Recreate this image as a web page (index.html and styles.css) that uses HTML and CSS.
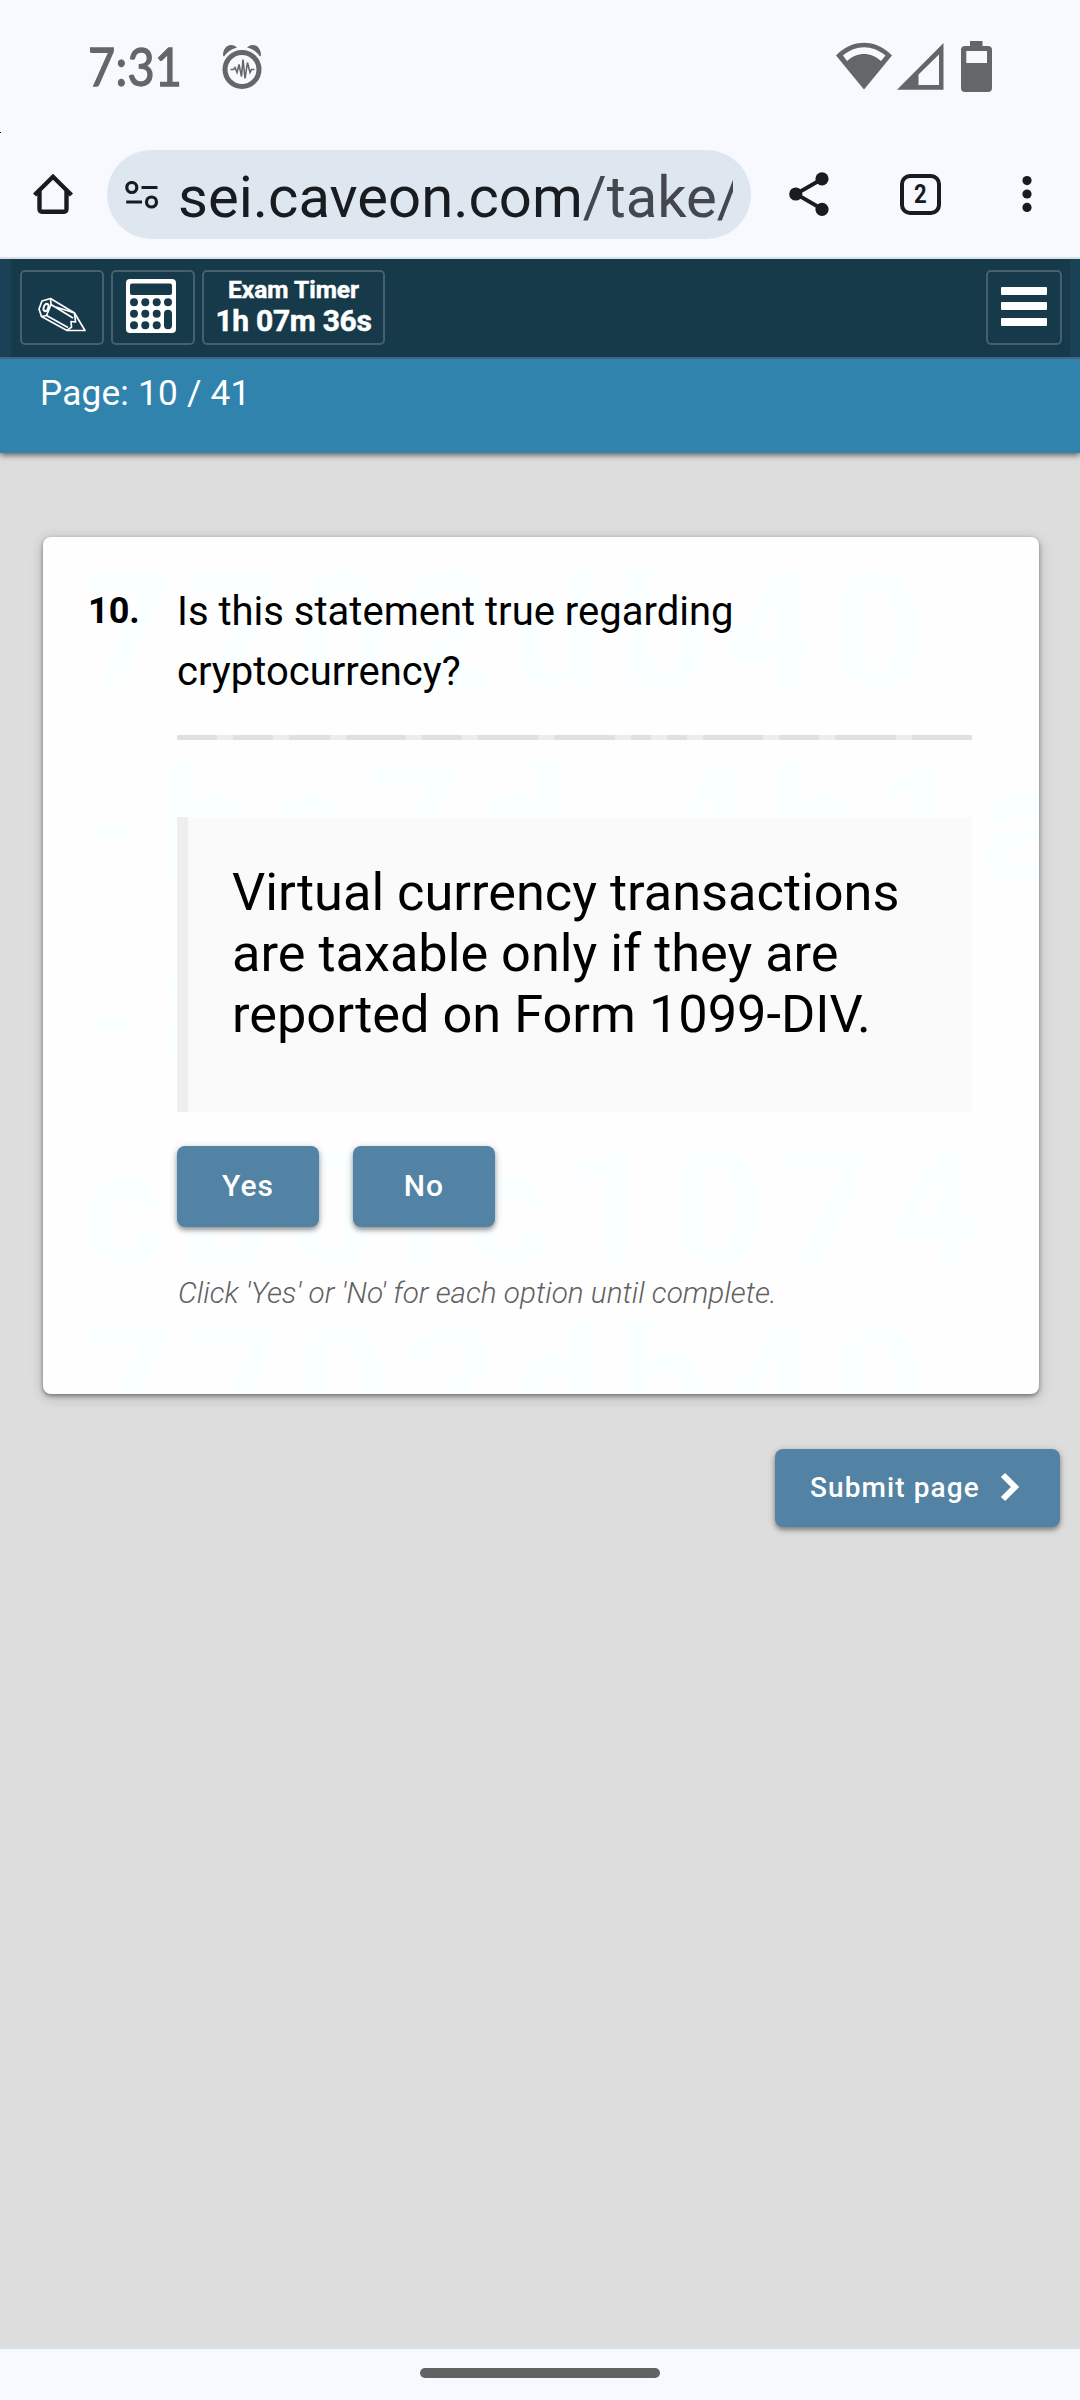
FILE: index.html
```html
<!DOCTYPE html>
<html lang="en">
<head>
<meta charset="utf-8">
<title>Exam</title>
<link rel="stylesheet" href="styles.css">
</head>
<body>
<header class="status">
  <span class="clock">7:31</span>
  <svg class="alarm" viewBox="0 0 40 46" width="40" height="46" fill="none" stroke="#646668">
    <circle cx="20" cy="25.500" r="17" stroke-width="5"/>
    <path d="M1 11.500C1 2 9 -2 15 3.500C9 5 5 8 2 12.500ZM39 11.500C39 2 31 -2 25 3.500C31 5 35 8 38 12.500Z" fill="#646668" stroke="none"/>
    <path d="M8.500 25.500h3l1.500-2 2 5 2-8 2.500 12 1.500-17 2 19 2.500-16 2.500 10 1.500-3h3" stroke-width="1.600"/>
  </svg>
  <svg class="signals" viewBox="836 41 156 52" width="156" height="52" fill="#646668">
    <path fill-rule="evenodd" d="M836 55.500C852 38.500 876 38.500 892 55.500L864 89.500ZM843 55.500L847 61C857 51.500 871 51.500 881 61L885.500 55.500C872 44.500 856 44.500 843 55.500Z"/>
    <path fill-rule="evenodd" d="M897 89.700L943.500 43V89.700ZM918.500 85H939V54.500L918.500 74.500Z"/>
    <path fill-rule="evenodd" d="M970 41h12.500v5H988q4 0 4 4v38q0 4-4 4H965q-4 0-4-4V50q0-4 4-4h5ZM966.300 51v12H987V51Z"/>
  </svg>
</header>
<nav class="browser">
  <svg class="home" viewBox="0 0 40 40" width="40" height="40" fill="none" stroke="#181c20" stroke-width="4.400">
    <path d="M1.500 21L20 2.800 38.500 21M6.500 17V34.500Q6.500 37.700 9 37.700H31Q33.500 37.700 33.500 34.500V17"/>
  </svg>
  <div class="pill">
    <svg class="tune" viewBox="0 0 34 28" width="34" height="28" fill="none" stroke="#181c20" stroke-width="3.200">
      <circle cx="6.800" cy="6.500" r="5"/><circle cx="26.500" cy="21" r="5"/><path d="M16.500 6.500H32.500M1.200 21H17"/>
    </svg>
    <div class="url">sei.caveon.com<span>/take/</span></div>
  </div>
  <svg class="share" viewBox="0 0 40 44" width="40" height="44" fill="#181c20">
    <path d="M33 7L7 22 33 37" fill="none" stroke="#181c20" stroke-width="3.800"/>
    <circle cx="33" cy="6.800" r="6.600"/><circle cx="6.800" cy="22" r="6.600"/><circle cx="33" cy="37.300" r="6.600"/>
  </svg>
  <div class="tabs"><span>2</span></div>
  <svg class="more" viewBox="0 0 10 36" width="10" height="36" fill="#181c20">
    <circle cx="5" cy="4.600" r="4.600"/><circle cx="5" cy="18" r="4.600"/><circle cx="5" cy="31.400" r="4.600"/>
  </svg>
</nav>
<div class="toolbar">
  <div class="tool pencil">
    <svg viewBox="38 297 48 35" width="48" height="35" fill="none" stroke="#fff" stroke-width="1.700" stroke-linejoin="round">
      <path d="M50.500 298.500L42 301 39 309 41.500 316.500 67 330.500 85 330.500 74.500 313Z"/>
      <path d="M50.500 298.500L51 304.500 46.500 315.500 41.500 316.500M51 304.500L73 318M46.500 315.500L68 327.500M56 307L74.500 313M74.500 313L75.500 322 71 321.500 71.500 327 67 330.500"/>
      <ellipse cx="46" cy="307.500" rx="2.200" ry="3.800" transform="rotate(22 46 307.500)" stroke-width="2"/>
    </svg>
  </div>
  <div class="tool calc">
    <svg viewBox="0 0 50 54" width="50" height="54">
      <rect width="50" height="54" rx="4" fill="#fff"/>
      <g fill="#163a4a">
        <rect x="4" y="4.500" width="42" height="11.500" rx="2"/>
        <circle cx="8" cy="23.300" r="4"/><circle cx="19.300" cy="23.300" r="4"/><circle cx="30.700" cy="23.300" r="4"/><circle cx="42" cy="23.300" r="4"/>
        <circle cx="8" cy="34.700" r="4"/><circle cx="19.300" cy="34.700" r="4"/><circle cx="30.700" cy="34.700" r="4"/>
        <circle cx="8" cy="46.300" r="4"/><circle cx="19.300" cy="46.300" r="4"/><circle cx="30.700" cy="46.300" r="4"/>
        <rect x="38" y="30.700" width="8" height="19.500" rx="4"/>
      </g>
    </svg>
  </div>
  <div class="tool timer"><span class="timer-label">Exam Timer</span><span class="timer-value">1h 07m 36s</span></div>
  <div class="tool menu"><i></i><i></i><i></i></div>
</div>
<div class="pagebar"><span>Page: 10 / 41</span></div>
<main>
  <section class="card">
    <div class="marks" aria-hidden="true">
      <span class="m1">7702db40</span><span class="m2">-ba7d-4b1a</span><span class="m3">-8</span><span class="m4">cb0fc1074</span><span class="m5">7702db40</span>
    </div>
    <div class="number">10.</div>
    <div class="content">
      <p class="question">Is this statement true regarding cryptocurrency?</p>
      <div class="progress"></div>
      <blockquote>Virtual currency transactions are taxable only if they are reported on Form 1099-DIV.</blockquote>
      <div class="answers"><button>Yes</button><button>No</button></div>
      <p class="hint">Click 'Yes' or 'No' for each option until complete.</p>
    </div>
  </section>
  <button class="submit"><span>Submit page</span>
    <svg viewBox="0 0 20 30" width="20" height="30" fill="none" stroke="#fff" stroke-width="6"><path d="M3 3L15 15 3 27"/></svg>
  </button>
</main>
<footer><div class="handle"></div></footer>
</body>
</html>
```
FILE: styles.css
```css
* { box-sizing: border-box; }
body { margin: 0; width: 1080px; height: 2400px; overflow: hidden; display: flex; flex-direction: column; background: #ddd; font-family: Roboto, sans-serif; color: #000; }
svg { display: block; flex: none; }
p, blockquote { margin: 0; }
button { border: 0; padding: 0; font: inherit; }
.status { height: 138px; flex: none; display: flex; align-items: flex-start; padding-left: 88px; background: linear-gradient(#000, #000) 0 132px / 1px 1px no-repeat #f8f9ff; }
.clock { width: 134px; font: 400 52px/60px Lato, sans-serif; transform: scaleX(.9); transform-origin: 0 0; letter-spacing: .3px; -webkit-text-stroke: 1.300px #646668; color: #646668; margin-top: 36px; }
.alarm { margin-top: 44px; }
.signals { margin: 41px 0 0 574px; }
.browser { height: 121px; flex: none; display: flex; align-items: center; background: #f8f9ff; border-bottom: 2px solid #d9e1e9; padding: 0 0 7px 33px; }
.home { margin-top: 0; }
.pill { width: 644px; height: 89px; margin: 1px 0 0 34px; border-radius: 45px; background: #dee6f0; display: flex; align-items: center; padding-left: 18px; }
.url { width: 555px; margin-left: 19px; margin-top: 4px; overflow: hidden; white-space: nowrap; font-size: 58px; line-height: 80px; color: #181c20; }
.url span { color: #44474e; }
.share { margin: 0 0 0 38px; }
.tabs { width: 41px; height: 41px; margin: 0 0 0 71px; border: 4.500px solid #181c20; border-radius: 10px; display: flex; align-items: center; justify-content: center; font-weight: 700; font-size: 26px; line-height: 30px; color: #181c20; }
.tabs span { transform: scaleX(.85); }
.more { margin: 0 0 0 81px; }
.toolbar { height: 98px; flex: none; display: flex; align-items: flex-start; padding: 11px 8px 0 9px; background: #163a4a; border: solid #1a4156; border-width: 0 10px 0 11px; box-shadow: 0 2px 0 #3f6785; margin-bottom: 2px; position: relative; }
.tool { width: 84px; height: 75px; border: 2px solid #456070; border-radius: 5px; margin-right: 7px; display: flex; align-items: center; justify-content: center; color: #fff; }
.pencil svg { margin-top: 13px; }
.calc svg { margin: 0 4px 4px 0; }
.timer { width: 183px; flex-direction: column; font-weight: 700; -webkit-text-stroke: .5px #fff; }
.timer-label { font-size: 24.500px; line-height: 28px; margin-top: -2px; }
.timer-value { font-size: 30px; line-height: 34px; letter-spacing: -.3px; margin-bottom: -1px; }
.menu { width: 76px; margin: 0 0 0 auto; padding-bottom: 3px; flex-direction: column; gap: 7.500px; }
.menu i { width: 46px; height: 8px; border-radius: 1px; background: #fff; }
.pagebar { height: 94px; flex: none; padding: 13px 0 0 40px; background: #3083ac; color: #fff; font-size: 35.200px; letter-spacing: .2px; line-height: 42px; box-shadow: 0 2px 6px rgba(0,0,0,.6); }
main { flex: 1; padding: 84px 20px 0 43px; display: flex; flex-direction: column; align-items: flex-start; }
.card { position: relative; flex: none; width: 996px; height: 857px; padding: 44px 67px 0 45px; display: flex; background: #fefefe; border-radius: 8px; box-shadow: 0 2px 4px rgba(0,0,0,.4), 0 3px 14px rgba(0,0,0,.2); }
.marks { position: absolute; inset: 0; overflow: hidden; border-radius: 8px; color: #faffff; font: 700 160px/190px Roboto, sans-serif; letter-spacing: 16px; }
.marks span { position: absolute; left: 38px; white-space: nowrap; }
.m1 { top: 0; }
.m2 { top: 194px; }
.m3 { top: 387px; }
.m4 { top: 577px; }
.m5 { top: 754px; }
.number { width: 89px; font-weight: 700; font-size: 36px; line-height: 60px; position: relative; }
.content { width: 795px; position: relative; }
.question { font-size: 40px; line-height: 60px; margin-top: -14px; padding-top: 15px; }
.progress { height: 5px; margin-top: 33px; background:
  linear-gradient(90deg, #e0e0e0 40px, #ededed 40px 56px, #e0e0e0 56px 96px, #ededed 96px 112px, #e0e0e0 112px 153px, #ededed 153px 169px, #e0e0e0 169px 229px, #ededed 229px 245px, #e0e0e0 245px 285px, #ededed 285px 301px, #e0e0e0 301px 361px, #ededed 361px 377px, #e0e0e0 377px 438px, #ededed 438px 454px, #e0e0e0 454px 474px, #ededed 474px 490px, #e0e0e0 490px 510px, #ededed 510px 526px, #e0e0e0 526px 586px, #ededed 586px 602px, #e0e0e0 602px 642px, #ededed 642px 658px, #e0e0e0 658px 719px, #ededed 719px 735px, #e0e0e0 735px); }
blockquote { margin-top: 77px; height: 295px; padding: 45px 30px 0 44px; border-left: 11px solid #eee; background: #fafafa; font-size: 52.300px; line-height: 61.200px; }
.answers { display: flex; gap: 34px; margin-top: 34px; }
.answers button { width: 142px; height: 81px; font-size: 30px; padding-bottom: 3px; }
.answers button, .submit { border-radius: 8px; background: #5383a4; color: #fff; font-weight: 500; letter-spacing: 1.100px; box-shadow: 0 3px 4px rgba(0,0,0,.3), 0 2px 9px rgba(0,0,0,.2); }
.hint { margin-top: 46px; padding-left: 1px; font-size: 29.700px; line-height: 40px; font-weight: 300; font-style: italic; color: #616161; white-space: nowrap; }
.submit { flex: none; width: 285px; height: 78px; margin: 55px 0 0 auto; display: flex; align-items: center; padding: 0 0 2px 35px; font-size: 28px; }
.submit svg { margin-left: 20px; }
footer { height: 53px; flex: none; border-top: 2px solid #d9e1e9; background: #f8f9ff; display: flex; justify-content: center; padding-top: 19px; }
.handle { width: 240px; height: 10px; border-radius: 5px; background: #606364; }
```
